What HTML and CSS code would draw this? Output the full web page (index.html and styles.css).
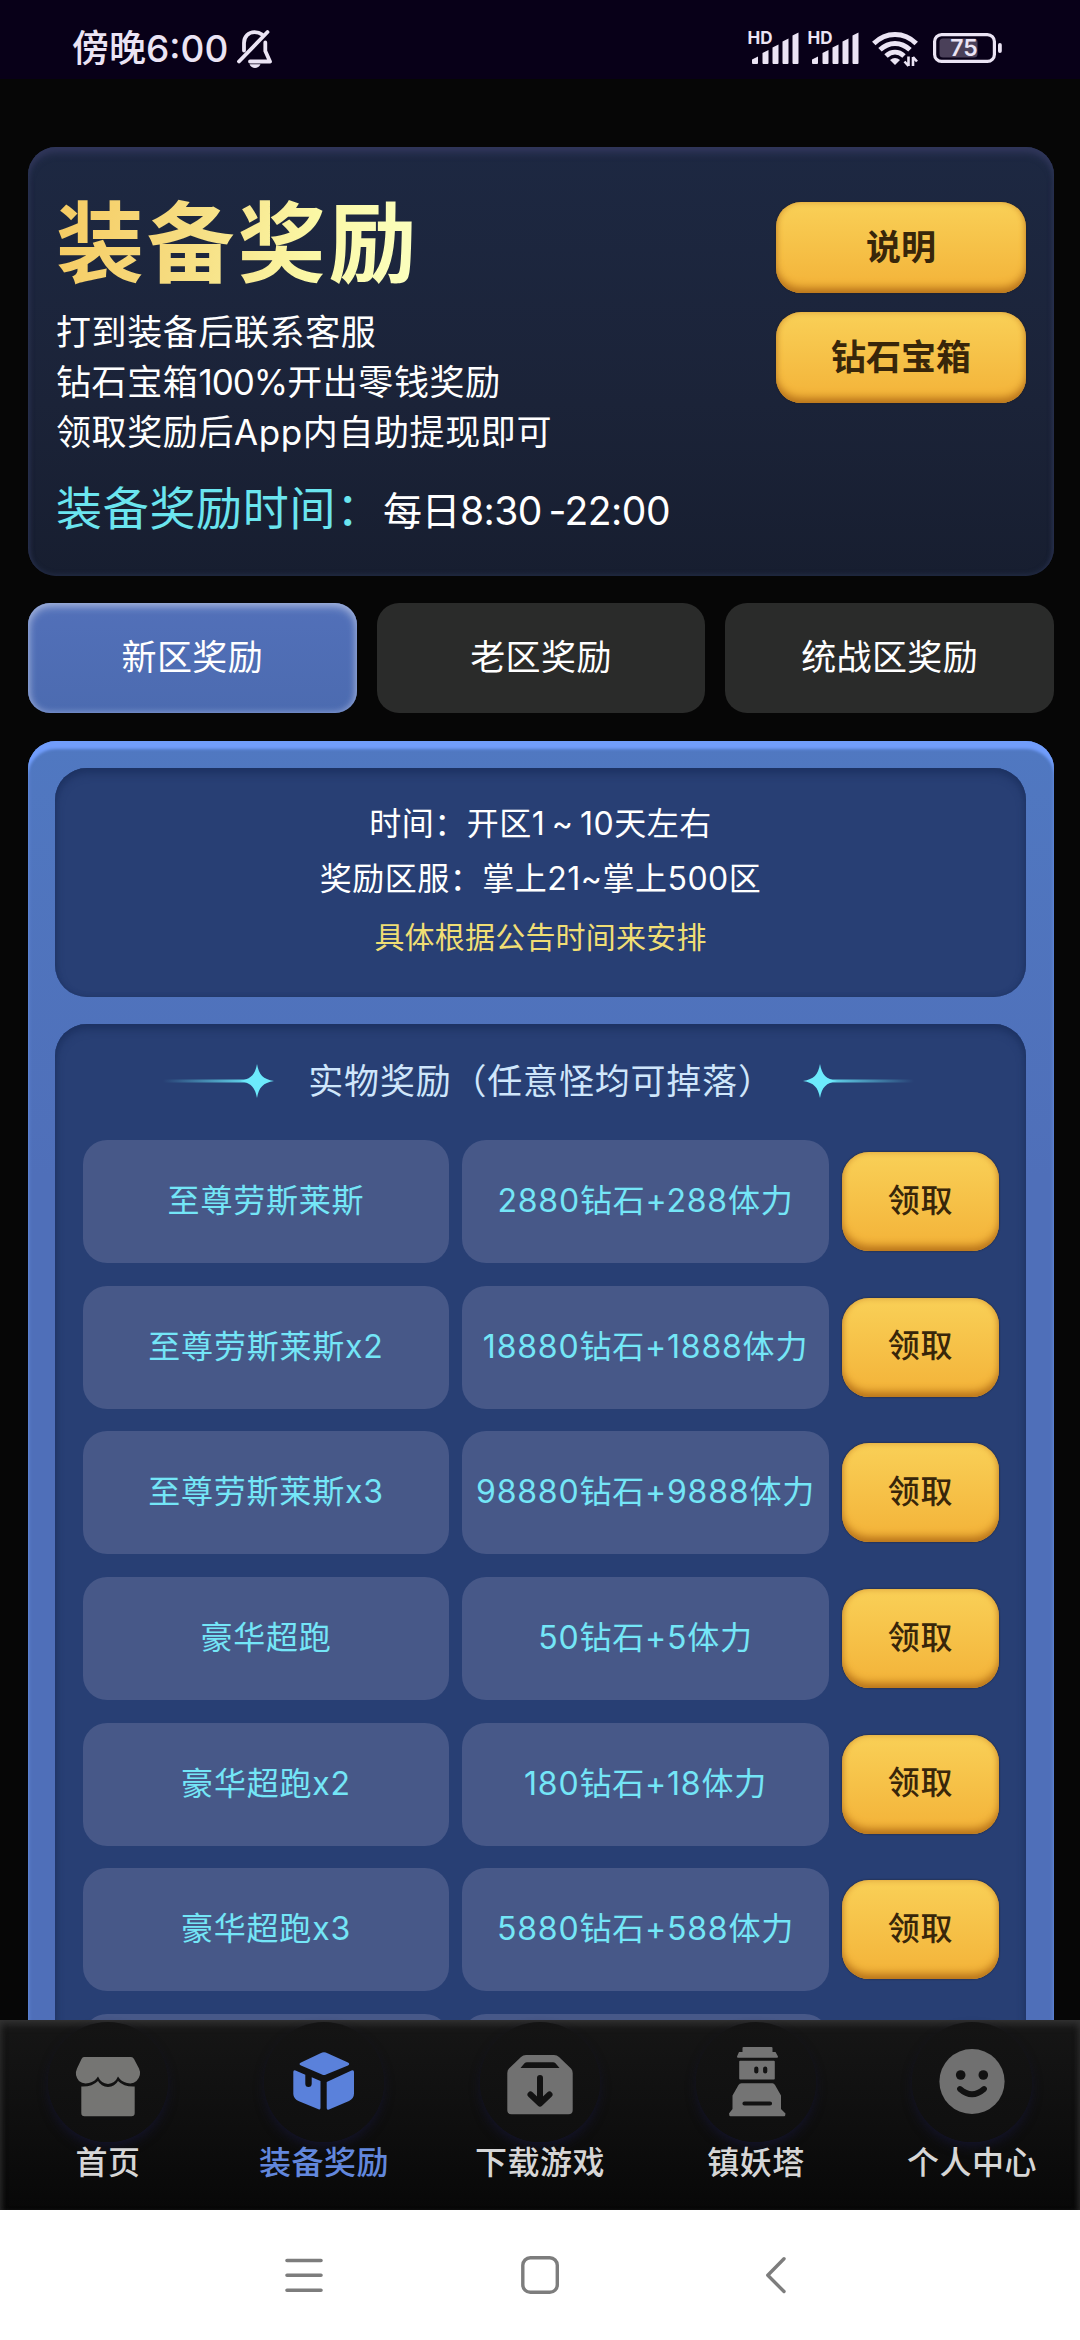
FILE: index.html
```html
<!DOCTYPE html>
<html lang="zh-CN">
<head>
<meta charset="utf-8">
<title>装备奖励</title>
<link rel="stylesheet" href="styles.css">
</head>
<body>
<div class="phone">
  <header class="status">
    <div class="status-left">
      <span class="clock">傍晚6:00</span>
      <svg class="bell" width="36" height="40" viewBox="0 0 36 40" fill="none" stroke="#ebe4f4" stroke-width="3.8" stroke-linecap="round" stroke-linejoin="round">
        <path d="M7 21.500V14C7 7.500 11.500 3.200 17.500 3.200C20.500 3.200 23 4 25 5.600"/>
        <path d="M28.300 13.500V22L33 32.500H13"/>
        <path d="M2 32.500L30.500 3"/>
        <path d="M12.500 35.200h11c-1.200 2.500-3.200 3.800-5.500 3.800s-4.300-1.300-5.500-3.800z" fill="#ebe4f4" stroke="none"/>
      </svg>
    </div>
    <div class="status-right">
      <svg class="signal" width="50" height="34" viewBox="0 0 50 34" fill="#ebe4f4">
        <text x="-1.500" y="13" class="hd">HD</text>
        <path d="M3 28.500l6-3V32q0 1-1 1H4q-1 0-1-1zM13.500 22l6-3V32q0 1-1 1h-4q-1 0-1-1zM23.500 16.500l6-3V32q0 1-1 1h-4q-1 0-1-1zM33.500 10.500l6-3V32q0 1-1 1h-4q-1 0-1-1zM43.500 4.500l6-3V32q0 1-1 1h-4q-1 0-1-1z"/>
      </svg>
      <svg class="signal" width="50" height="34" viewBox="0 0 50 34" fill="#ebe4f4">
        <text x="-1.500" y="13" class="hd">HD</text>
        <path d="M3 28.500l6-3V32q0 1-1 1H4q-1 0-1-1zM13.500 22l6-3V32q0 1-1 1h-4q-1 0-1-1zM23.500 16.500l6-3V32q0 1-1 1h-4q-1 0-1-1zM33.500 10.500l6-3V32q0 1-1 1h-4q-1 0-1-1zM43.500 4.500l6-3V32q0 1-1 1h-4q-1 0-1-1z"/>
      </svg>
      <svg class="wifi" width="46" height="36" viewBox="0 0 46 36" fill="none" stroke="#ebe4f4" stroke-width="5">
        <path d="M1.800 12.500C14 .500 32 .500 44.200 12.500"/>
        <path d="M8 18.800c9-8.500 21-8.500 30 0"/>
        <path d="M14 25c5.500-5 12.500-5 18 0"/>
        <path d="M23 34l-5-5q5-4 10 0z" fill="#ebe4f4" stroke="none"/>
        <path d="M36.500 25.500V35M36.500 35l-4-4.500M41 35V26M41 26l4 4.500" stroke-width="2.600"/>
      </svg>
      <svg class="battery" width="69" height="30" viewBox="0 0 69 30">
        <rect x="1.600" y="1.600" width="59.800" height="26.800" rx="7" fill="none" stroke="#ebe4f4" stroke-width="3.200"/>
        <rect x="6.500" y="5.500" width="38" height="19" rx="3.500" fill="#4a4059"/>
        <rect x="65" y="10" width="3.800" height="10" rx="1.900" fill="#ebe4f4"/>
        <text x="31" y="23" class="level" text-anchor="middle">75</text>
      </svg>
    </div>
  </header>

  <main class="content">
    <section class="hero">
      <div class="hero-text">
        <h1>装备奖励</h1>
        <p class="desc">打到装备后联系客服<br>钻石宝箱<span class="tight">100%</span>开出零钱奖励<br>领取奖励后App内自助提现即可</p>
        <p class="time"><span class="time-label">装备奖励时间：</span><span class="time-value">每日8:30 -22:00</span></p>
      </div>
      <div class="hero-actions">
        <button class="gold">说明</button>
        <button class="gold">钻石宝箱</button>
      </div>
    </section>

    <nav class="zones">
      <button class="zone active">新区奖励</button>
      <button class="zone">老区奖励</button>
      <button class="zone">统战区奖励</button>
    </nav>

    <section class="panel">
      <div class="info">
        <p class="period">时间：开区1 ~ 10天左右</p>
        <p>奖励区服：掌上21~掌上500区</p>
        <p class="note">具体根据公告时间来安排</p>
      </div>
      <div class="rewards">
        <div class="heading">
          <svg width="112" height="36" viewBox="0 0 112 36">
            <defs><linearGradient id="fadeIn"><stop offset="0" stop-color="#67e4f8" stop-opacity="0"/><stop offset="1" stop-color="#67e4f8"/></linearGradient></defs>
            <rect x="0" y="16.500" width="92" height="3" fill="url(#fadeIn)"/>
            <path d="M94 1C96 12 100 16 111 18C100 20 96 24 94 35C92 24 88 20 77 18C88 16 92 12 94 1z" fill="#6ceafc"/>
          </svg>
          <h2>实物奖励（任意怪均可掉落）</h2>
          <svg width="112" height="36" viewBox="0 0 112 36">
            <defs><linearGradient id="fadeOut"><stop offset="0" stop-color="#67e4f8"/><stop offset="1" stop-color="#67e4f8" stop-opacity="0"/></linearGradient></defs>
            <rect x="20" y="16.500" width="92" height="3" fill="url(#fadeOut)"/>
            <path d="M18 1C20 12 24 16 35 18C24 20 20 24 18 35C16 24 12 20 1 18C12 16 16 12 18 1z" fill="#6ceafc"/>
          </svg>
        </div>
        <div class="grid">
          <div class="cell">至尊劳斯莱斯</div><div class="cell">2880钻石+288体力</div><button class="gold claim">领取</button>
          <div class="cell">至尊劳斯莱斯x2</div><div class="cell">18880钻石+1888体力</div><button class="gold claim">领取</button>
          <div class="cell">至尊劳斯莱斯x3</div><div class="cell">98880钻石+9888体力</div><button class="gold claim">领取</button>
          <div class="cell">豪华超跑</div><div class="cell">50钻石+5体力</div><button class="gold claim">领取</button>
          <div class="cell">豪华超跑x2</div><div class="cell">180钻石+18体力</div><button class="gold claim">领取</button>
          <div class="cell">豪华超跑x3</div><div class="cell">5880钻石+588体力</div><button class="gold claim">领取</button>
          <div class="cell"></div><div class="cell"></div>
        </div>
      </div>
    </section>
  </main>

  <nav class="tabbar">
    <a class="tab">
      <svg class="tab-icon" viewBox="0 0 120 120" fill="#757573">
        <path d="M36 35H83Q85 35 86 37L91 46.500Q94 53 88.500 59Q85 62.500 79 61Q73 59.500 70 54.500Q67 61.500 60 62Q53 61.500 50 54.500Q47 59.500 41 61Q35 62.500 31 59Q26 53 29 46.500L33.500 37Q34.500 35 36 35z"/>
        <path d="M33.300 64.500Q44 65 50 59Q53 64.500 60 65Q67 64.500 70 59Q76 65 86.700 64.500V91Q86.700 94.200 83.500 94.200H36.500Q33.300 94.200 33.300 91z"/>
      </svg>
      <span>首页</span>
    </a>
    <a class="tab current">
      <svg class="tab-icon" viewBox="0 0 120 120" fill="#5a81db">
        <path d="M56.500 31.200Q60 29.500 63.500 31.200L84 40.500Q86.500 42 84 43.500L62 52.500Q60 53.500 58 52.500L37 43.500Q34 42 37 40.500z"/>
        <path d="M31.500 48.500L41.300 52.700V61.500Q41.300 65 44.500 65Q47.700 65 47.700 61.500V55.300L56.500 59V86Q56.500 88 54.500 87.200L35 79.300Q29.500 77 29.300 72V50Q29.300 47.700 31.500 48.500z"/>
        <path d="M62.700 60L87.500 48.500Q90 47.500 90 50V71.500Q90 76.500 85 79L65 87.500Q62.700 88.500 62.700 86z"/>
      </svg>
      <span>装备奖励</span>
    </a>
    <a class="tab">
      <svg class="tab-icon" viewBox="0 0 120 120" fill="#717171">
        <path fill-rule="evenodd" d="M46 33H74Q77 33 79 35L91 46.500Q92.700 48 92.700 51V88Q92.700 92.300 88.400 92.300H31.600Q27.300 92.300 27.300 88V51Q27.300 48 29 46.500L41 35Q43 33 46 33zM47 40.200Q45.500 40.200 44.500 41.200L40.500 46H79.500L75.500 41.200Q74.500 40.200 73 40.200z"/>
        <path d="M60 56V80M50.500 72.500L60 81.500L69.500 72.500" fill="none" stroke="#121212" stroke-width="6" stroke-linecap="round" stroke-linejoin="round"/>
      </svg>
      <span>下载游戏</span>
    </a>
    <a class="tab">
      <svg class="tab-icon" viewBox="0 0 120 120" fill="#747474">
        <path d="M47.500 25H75.500Q76.500 25 76.500 26V30H79.500L82 34.500Q82 35.700 81 35.700H42Q41 35.700 41 34.500L43 30H46.500V26Q46.500 25 47.500 25z"/>
        <rect x="43.200" y="38.700" width="35.600" height="18.800" rx="1"/>
        <path d="M45.500 61.300H76.500Q78 61.300 79 63L85 73.500V87L89.500 91.500Q89.500 94.200 88 94.200H34.500Q33 94.200 33 91.500L36.500 87V73.500L42.500 63Q43.500 61.300 45.500 61.300z"/>
        <path d="M60.300 46.500v3M69.200 46.500v3M48.500 81.500H74" fill="none" stroke="#121212" stroke-width="4.200" stroke-linecap="round"/>
      </svg>
      <span>镇妖塔</span>
    </a>
    <a class="tab">
      <svg class="tab-icon" viewBox="0 0 120 120" fill="#707070">
        <circle cx="60" cy="59.500" r="32.600"/>
        <circle cx="48.700" cy="53" r="4.800" fill="#121212"/><circle cx="71.300" cy="53" r="4.800" fill="#121212"/>
        <path d="M48 67Q60 77.500 72 67" fill="none" stroke="#121212" stroke-width="5.800" stroke-linecap="round"/>
      </svg>
      <span>个人中心</span>
    </a>
  </nav>

  <footer class="sysnav">
    <svg width="38" height="40" viewBox="0 0 38 40" stroke="#7d7d7d" stroke-width="3.600" stroke-linecap="round"><path d="M2 5.500H36M2 20.300H36M2 35.200H36"/></svg>
    <svg width="38" height="40" viewBox="0 0 38 40" fill="none" stroke="#7d7d7d" stroke-width="3.400"><rect x="1.800" y="2.800" width="34.500" height="34.500" rx="7.500"/></svg>
    <svg width="38" height="40" viewBox="0 0 38 40" fill="none" stroke="#7d7d7d" stroke-width="3.400" stroke-linecap="round" stroke-linejoin="round"><path d="M27 3.800L10.800 20.300L27 36.500"/></svg>
  </footer>
</div>
</body>
</html>
```

FILE: styles.css
```css
* { box-sizing: border-box; }

body {
  margin: 0;
  background: #060606;
  font-family: Inter, "Noto Sans CJK SC", sans-serif;
}

h1, h2, p { margin: 0; font-weight: 400; }

button {
  border: 0;
  padding: 0;
  font-family: inherit;
}

svg { display: block; flex: none; }

.phone {
  width: 1080px;
  height: 2340px;
  display: flex;
  flex-direction: column;
  overflow: hidden;
}

/* Status bar */
.status {
  height: 79px;
  flex: none;
  display: flex;
  justify-content: space-between;
  padding: 0 78px 0 72px;
  background: #080018;
  color: #ebe4f4;
}

.status-left { display: flex; gap: 9px; }

.clock {
  font-size: 37px;
  font-weight: 500;
  line-height: 98px;
  white-space: nowrap;
}

.bell { margin-top: 29px; }

.status-right { display: flex; padding-top: 31px; }

.signal { margin-right: 10px; overflow: visible; }
.signal + .wifi { margin-left: 3px; margin-right: 15px; }
.battery { margin-top: 2px; }

.hd { font-size: 17px; font-weight: 700; }
.level { font-size: 23px; font-weight: 600; fill: #ebe4f4; }

/* Scrolling content */
.content {
  height: 1941px;
  flex: none;
  overflow: hidden;
  padding: 68px 26px 0 28px;
}

.hero {
  height: 429px;
  display: flex;
  justify-content: space-between;
  padding: 0 28px;
  border-radius: 28px;
  background: linear-gradient(#1d2842, #1b2338 60%, #171e30);
  box-shadow: inset 0 7px 7px -1px #30365a, inset 0 0 5px 1px #262f4a;
}

.hero-text { padding-top: 46px; }

h1 {
  width: max-content;
  font-size: 88px;
  font-weight: 700;
  line-height: 100px;
  letter-spacing: 2.8px;
  background: linear-gradient(100deg, #f6cb62, #f6dc80 35%, #fbf8a6 70%, #fbffc0);
  -webkit-background-clip: text;
  background-clip: text;
  color: transparent;
}

.desc {
  margin-top: 14px;
  font-size: 35px;
  letter-spacing: 0.6px;
  line-height: 50px;
  color: #fff;
  white-space: nowrap;
}

.tight { letter-spacing: -1px; }

.time {
  display: flex;
  margin-top: 21px;
  line-height: 60px;
  white-space: nowrap;
}

.time-label { font-size: 46px; letter-spacing: 0.7px; color: #6be5ef; }
.time-value {
  font-size: 39px;
  letter-spacing: -0.5px;
  word-spacing: -4px;
  line-height: 66px;
  color: #fff;
}

.hero-actions {
  display: flex;
  flex-direction: column;
  gap: 19px;
  padding-top: 55px;
}

.gold {
  width: 250px;
  height: 91px;
  padding-bottom: 7px;
  border-radius: 25px;
  background: linear-gradient(#f9d057, #f3b238);
  box-shadow: inset 0 -7px 8px -2px #b8741a, inset 0 0 6px #d89b38, 0 0 2px #241f22;
  color: #38260a;
  font-size: 35px;
  font-weight: 600;
}

/* Zone switcher */
.zones {
  display: grid;
  grid-template-columns: repeat(3, 1fr);
  gap: 20px;
  margin-top: 27px;
}

.zone {
  height: 110px;
  padding-bottom: 8px;
  border-radius: 22px;
  background: #2a2b2a;
  color: #fff;
  font-size: 35px;
  letter-spacing: 0.4px;
}

.zone.active {
  background: linear-gradient(#5270b9, #4c6bb0);
  box-shadow: inset 0 3px 10px #a9b8de, inset 0 0 7px #7089c6;
}

/* Blue panel */
.panel {
  display: flex;
  flex-direction: column;
  gap: 27px;
  margin-top: 28px;
  padding: 27px 28px 27px 27px;
  border-radius: 28px;
  background: linear-gradient(#5078c1, #4f6fb9 30%, #4f6fb9);
  box-shadow: inset 0 9px 3px -1px #719dfb, inset 0 0 5px #6289da;
}

.info, .rewards {
  border-radius: 32px;
  background: #283f74;
  box-shadow: inset 0 5px 9px #1d3262, inset 0 0 4px #213767;
}

.info {
  height: 229px;
  padding-top: 28px;
  text-align: center;
  font-size: 32px;
  letter-spacing: 0.5px;
  line-height: 55px;
  color: #fff;
}

.period { word-spacing: -3px; }

.info .note {
  margin-top: 11px;
  font-size: 30px;
  letter-spacing: 0.2px;
  line-height: 40px;
  color: #f0de74;
}

.rewards { padding: 27px 27px 27px 28px; }

.heading {
  display: flex;
  align-items: center;
  justify-content: center;
  gap: 31px;
  height: 60px;
  margin-bottom: 29px;
  padding-right: 5px;
}

h2 {
  margin: 0 -3px 0 2px;
  font-size: 35px;
  letter-spacing: 0.8px;
  line-height: 60px;
  color: #cfe6fb;
  white-space: nowrap;
}

.grid {
  display: grid;
  grid-template-columns: 366px 367px 157px;
  grid-auto-rows: 123px;
  align-items: center;
  gap: 22.7px 13px;
}

.cell {
  height: 123px;
  display: flex;
  align-items: center;
  justify-content: center;
  padding-bottom: 7px;
  border-radius: 24px;
  background: #475888;
  color: #74e6f7;
  font-size: 32px;
  letter-spacing: 0.8px;
  white-space: nowrap;
}

.claim {
  width: 157px;
  height: 99px;
  border-radius: 27px;
  padding-bottom: 8px;
  font-size: 32px;
  font-weight: 500;
  letter-spacing: 0.8px;
}

/* App tab bar */
.tabbar {
  height: 190px;
  flex: none;
  display: grid;
  grid-template-columns: repeat(5, 1fr);
  background: linear-gradient(#161616, #0f0f0f 50%, #080808);
  box-shadow: inset 0 7px 8px -3px #343434, inset 5px 0 6px -4px #2c2c2c, inset -5px 0 6px -4px #2c2c2c;
}

.tab {
  display: flex;
  flex-direction: column;
  align-items: center;
  padding-top: 2px;
  color: #d6d6d6;
  font-size: 32px;
  font-weight: 500;
  letter-spacing: 0.5px;
  line-height: 42px;
}

.tab-icon {
  width: 120px;
  height: 120px;
  border-radius: 50%;
  background: linear-gradient(#141414, #0f0f0f);
  box-shadow: 0 6px 12px -2px #14142c;
}

.tab span { white-space: nowrap; }
.tab.current { color: #6287dc; }

/* System navigation */
.sysnav {
  height: 130px;
  flex: none;
  display: flex;
  justify-content: center;
  align-items: center;
  gap: 198px;
  background: #fff;
}
```
